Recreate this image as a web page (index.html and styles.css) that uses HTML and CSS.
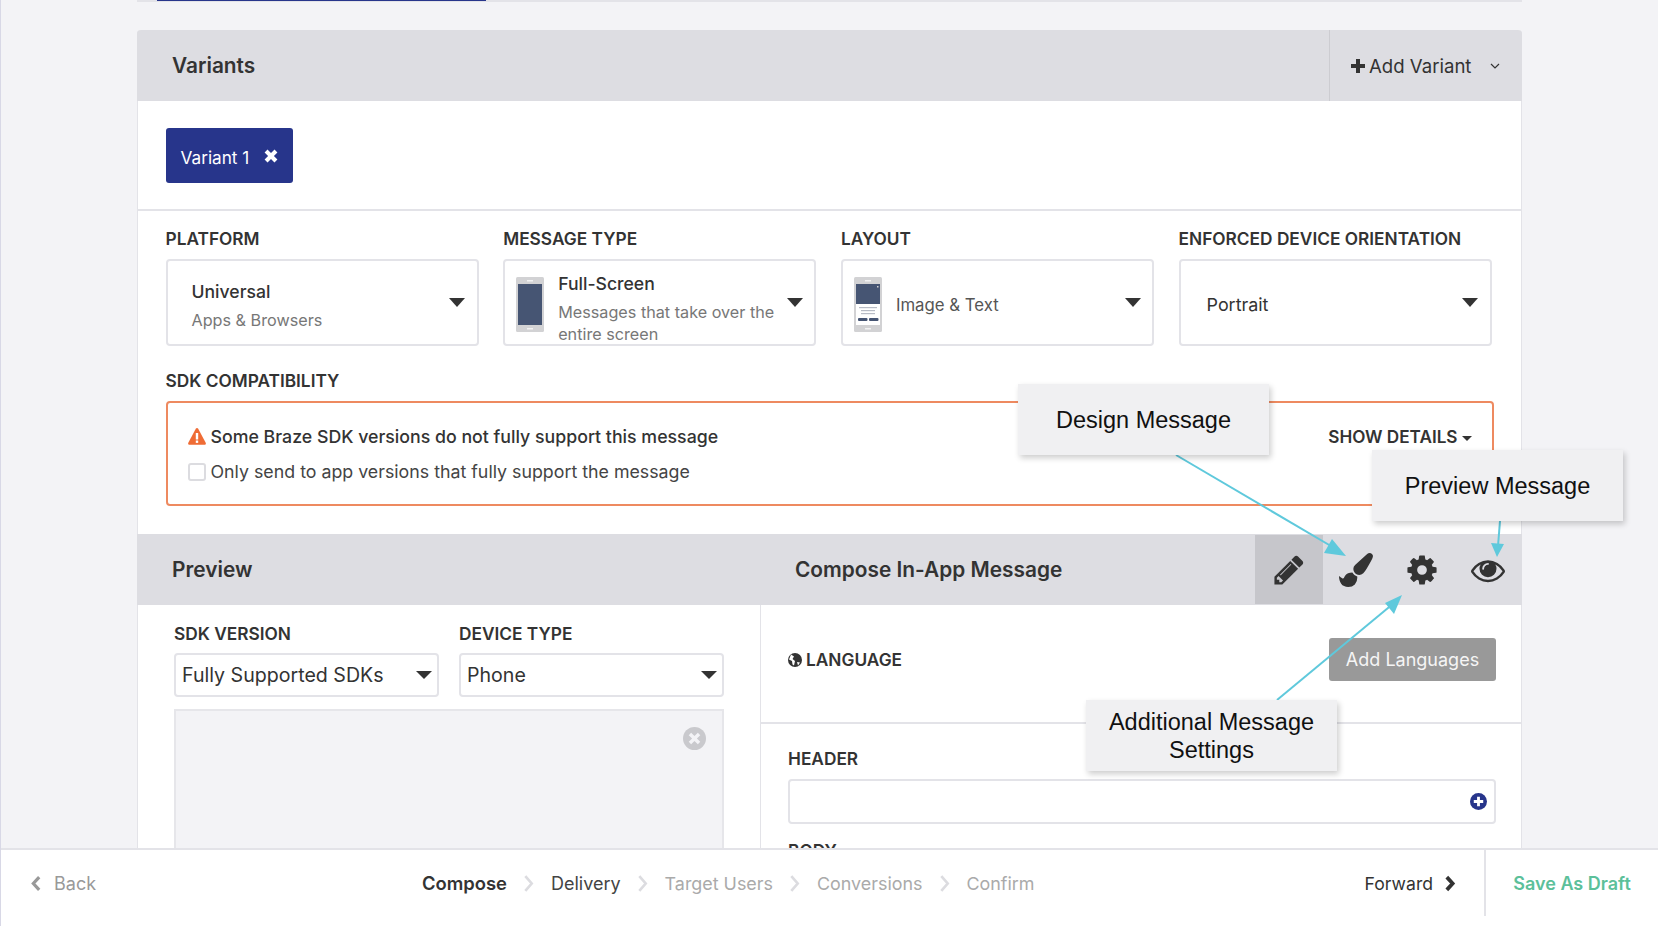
FILE: index.html
```html
<!DOCTYPE html>
<html>
<head>
    <title>Compose In-App Message</title>
    <link rel="stylesheet" href="styles.css">
</head>
<body>
    <div class="page">
        <div class="top-strip"><div class="top-strip-tab"></div></div>

        <div class="card">
            <div class="bar">
                <span class="bar-title">Variants</span>
                <div class="add-variant">
                    <svg class="add-plus" viewBox="0 0 14 14"><path d="M5 0h4v5h5v4H9v5H5V9H0V5h5z"/></svg>
                    <span>Add Variant</span>
                    <svg class="add-chevron" viewBox="0 0 10 6"><path d="M1 1l4 4 4-4" fill="none" stroke="#333" stroke-width="1.2"/></svg>
                </div>
            </div>

            <div class="variant-row">
                <div class="variant-pill">
                    <span>Variant 1</span>
                    <svg class="variant-x" viewBox="0 0 12 12"><path d="M3 .5L6 3.500 9 .5 11.500 3 8.500 6 11.500 9 9 11.500 6 8.500 3 11.500 .5 9 3.500 6 .5 3z"/></svg>
                </div>
            </div>

            <div class="settings">
                <div class="field">
                    <label class="field-label">PLATFORM</label>
                    <div class="picker picker-plain">
                        <div class="picker-text picker-text-tight">
                            <div class="picker-name">Universal</div>
                            <div class="picker-desc">Apps &amp; Browsers</div>
                        </div>
                        <span class="caret"></span>
                    </div>
                </div>
                <div class="field">
                    <label class="field-label">MESSAGE TYPE</label>
                    <div class="picker picker-icon">
                        <svg class="phone" viewBox="0 0 28 55">
                            <rect width="28" height="55" rx="1.500" fill="#d2d2d4"/>
                            <rect x="2" y="7" width="24" height="41" fill="#465573"/>
                            <rect x="11" y="3" width="6" height="1.500" fill="#f2f2f2"/>
                            <rect x="11" y="51" width="6" height="1.500" fill="#f2f2f2"/>
                        </svg>
                        <div class="picker-text picker-text-tighter">
                            <div class="picker-name">Full-Screen</div>
                            <div class="picker-desc">Messages that take over the entire screen</div>
                        </div>
                        <span class="caret"></span>
                    </div>
                </div>
                <div class="field">
                    <label class="field-label">LAYOUT</label>
                    <div class="picker picker-icon">
                        <svg class="phone" viewBox="0 0 28 55">
                            <rect width="28" height="55" rx="1.500" fill="#d2d2d4"/>
                            <rect x="2" y="7" width="24" height="41" fill="#fff"/>
                            <rect x="2" y="7" width="24" height="20" fill="#465573"/>
                            <rect x="23" y="9" width="1.500" height="1.500" fill="#d2d2d4"/>
                            <rect x="5" y="30" width="18" height="1.200" fill="#b8bcc6"/>
                            <rect x="7" y="33" width="14" height="1.200" fill="#b8bcc6"/>
                            <rect x="7" y="36" width="14" height="1.200" fill="#b8bcc6"/>
                            <rect x="4" y="41" width="9.500" height="3" rx="1" fill="#465573"/>
                            <rect x="15" y="41" width="9.500" height="3" rx="1" fill="#465573"/>
                            <rect x="11" y="3" width="6" height="1.500" fill="#f2f2f2"/>
                            <rect x="11" y="51" width="6" height="1.500" fill="#f2f2f2"/>
                        </svg>
                        <div class="picker-text picker-text-layout"><div class="picker-plain-value">Image &amp; Text</div></div>
                        <span class="caret"></span>
                    </div>
                </div>
                <div class="field">
                    <label class="field-label">ENFORCED DEVICE ORIENTATION</label>
                    <div class="picker picker-plain">
                        <div class="picker-text"><div class="picker-name picker-regular">Portrait</div></div>
                        <span class="caret"></span>
                    </div>
                </div>
            </div>

            <div class="compat">
                <label class="field-label">SDK COMPATIBILITY</label>
                <div class="compat-box">
                    <div class="compat-lines">
                        <div class="compat-line compat-warning">
                            <svg class="warn" viewBox="0 0 18 17">
                                <path d="M9 0c.5 0 .9.300 1.200.800l7.500 14c.500 1-.1 2-1.200 2H1.500c-1.100 0-1.700-1-1.200-2l7.500-14C8.100.300 8.500 0 9 0z" fill="#ef6c35"/>
                                <rect x="7.800" y="5" width="2.400" height="6.500" fill="#fff"/>
                                <rect x="7.800" y="12.500" width="2.400" height="2.400" fill="#fff"/>
                            </svg>
                            <span>Some Braze SDK versions do not fully support this message</span>
                        </div>
                        <div class="compat-line">
                            <span class="checkbox"></span>
                            <span>Only send to app versions that fully support the message</span>
                        </div>
                    </div>
                    <div class="show-details">SHOW DETAILS<span class="caret caret-small"></span></div>
                </div>
            </div>

            <div class="bar bar-split">
                <span class="bar-title bar-title-preview">Preview</span>
                <span class="bar-title bar-title-compose">Compose In-App Message</span>
                <div class="tabs">
                    <div class="tab tab-active">
                        <svg class="tab-icon" viewBox="0 0 1792 1792"><path d="M491 1536l91-91-235-235-91 91v107h128v128h107zm523-928q0-22-22-22-10 0-17 7l-542 542q-7 7-7 17 0 22 22 22 10 0 17-7l542-542q7-7 7-17zm-54-192l416 416-832 832h-416v-416zm683 96q0 53-37 90l-166 166-416-416 166-165q36-38 90-38 53 0 91 38l235 234q37 39 37 91z"/></svg>
                    </div>
                    <div class="tab">
                        <svg class="tab-icon" viewBox="0 0 1792 1792"><path d="M1615 0q70 0 122.500 46.500t52.500 116.500q0 63-45 151-332 629-465 752-97 91-218 91-126 0-216.500-92.500t-90.500-219.500q0-128 92-212l638-579q59-54 130-54zm-909 1034q39 76 106.500 130t150.500 76l1 71q4 213-129.500 347t-348.500 134q-123 0-218-46.500t-152.500-127.500-86.500-183-29-220q7 5 41 30t62 44.500 59 36.500 46 17q41 0 55-37 25-66 57.500-112.500t69.500-76 88-47.500 103-25.500 125-10.500z"/></svg>
                    </div>
                    <div class="tab">
                        <svg class="tab-icon" viewBox="0 0 1792 1792"><path d="M1152 896q0-106-75-181t-181-75-181 75-75 181 75 181 181 75 181-75 75-181zm512-109v222q0 12-8 23t-20 13l-185 28q-19 54-39 91 35 50 107 138 10 12 10 25t-9 23q-27 37-99 108t-94 71q-12 0-26-9l-138-108q-44 23-91 38-16 136-29 186-7 28-36 28h-222q-14 0-24.500-8.500t-11.500-21.500l-28-184q-49-16-90-37l-141 107q-10 9-25 9-14 0-25-11-126-114-165-168-7-10-7-23 0-12 8-23 15-21 51-66.500t54-70.500q-27-50-41-99l-183-27q-13-2-21-12.500t-8-23.500v-222q0-12 8-23t19-13l186-28q14-46 39-92-40-57-107-138-10-12-10-24 0-10 9-23 26-36 98.500-107.500t94.500-71.500q13 0 26 10l138 107q44-23 91-38 16-136 29-186 7-28 36-28h222q14 0 24.500 8.500t11.500 21.500l28 184q49 16 90 37l142-107q9-9 24-9 13 0 25 10 129 119 165 170 7 8 7 22 0 12-8 23-15 21-51 66.500t-54 70.500q26 50 41 98l183 28q13 2 21 12.500t8 23.500z"/></svg>
                    </div>
                    <div class="tab">
                        <svg class="tab-icon" viewBox="0 0 1792 1792"><path d="M1664 960q-152-236-381-353 61 104 61 225 0 185-131.500 316.500t-316.500 131.500-316.500-131.500-131.500-316.500q0-121 61-225-229 117-381 353 133 205 333.500 326.500t434.500 121.500 434.500-121.500 333.500-326.500zm-720-384q0-20-14-34t-34-14q-125 0-214.500 89.500t-89.500 214.500q0 20 14 34t34 14 34-14 14-34q0-86 61-147t147-61q20 0 34-14t14-34zm848 384q0 34-20 69-140 230-376.500 368.500t-499.500 138.500-499.500-139-376.500-368q-20-35-20-69t20-69q140-229 376.500-368t499.500-139 499.500 139 376.500 368q20 35 20 69z"/></svg>
                    </div>
                </div>
            </div>

            <div class="workspace">
                <div class="preview-col">
                    <div class="preview-fields">
                        <div class="field">
                            <label class="field-label">SDK VERSION</label>
                            <div class="select"><span>Fully Supported SDKs</span><span class="caret caret-mid"></span></div>
                        </div>
                        <div class="field">
                            <label class="field-label">DEVICE TYPE</label>
                            <div class="select"><span>Phone</span><span class="caret caret-mid"></span></div>
                        </div>
                    </div>
                    <div class="device-frame">
                        <svg class="device-close" viewBox="0 0 24 24">
                            <circle cx="12" cy="12" r="12" fill="#c9c9cd"/>
                            <path d="M8.500 6L12 9.500 15.500 6 18 8.500 14.500 12 18 15.500 15.500 18 12 14.500 8.500 18 6 15.500 9.500 12 6 8.500z" fill="#f3f3f6"/>
                        </svg>
                    </div>
                </div>
                <div class="compose-col">
                    <div class="language-row">
                        <div class="language-label">
                            <svg class="globe" viewBox="0 0 14 14">
                                <circle cx="7" cy="7" r="7" fill="#333"/>
                                <path d="M3 1.500l3 2-1.500 2.500 2.500 2-1 4.500-1.500-1-.5-3.500L1 6.500z M9 9l3 .5-2 3z" fill="#fff"/>
                            </svg>
                            <span class="field-label">LANGUAGE</span>
                        </div>
                        <div class="add-languages">Add Languages</div>
                    </div>
                    <div class="compose-fields">
                        <label class="field-label">HEADER</label>
                        <div class="text-input">
                            <svg class="input-plus" viewBox="0 0 18 18">
                                <circle cx="9" cy="9" r="9" fill="#27358b"/>
                                <path d="M7.500 4h3v3.500H14v3h-3.500V14h-3v-3.500H4v-3h3.500z" fill="#fff"/>
                            </svg>
                        </div>
                        <label class="field-label field-label-body">BODY</label>
                    </div>
                </div>
            </div>
        </div>
    </div>

    <!-- callouts drawn over the screenshot -->
    <svg class="arrows" viewBox="0 0 1658 926">
        <g stroke="#5fc9dc" stroke-width="2" fill="#5fc9dc">
            <line x1="1176" y1="455" x2="1336" y2="549"/>
            <path d="M1346 556l-22-3 8-14z" stroke="none"/>
            <line x1="1500" y1="521" x2="1498" y2="546"/>
            <path d="M1497 557l-6-14 13 1z" stroke="none"/>
            <line x1="1277" y1="700" x2="1394" y2="603"/>
            <path d="M1402 595l-8 19-9-11z" stroke="none"/>
        </g>
    </svg>
    <div class="callout callout-design">Design Message</div>
    <div class="callout callout-preview">Preview Message</div>
    <div class="callout callout-settings">Additional Message Settings</div>

    <div class="footer">
        <div class="footer-back">
            <svg class="footer-chevron" viewBox="0 0 10 16"><path d="M8 2L2.500 8 8 14" fill="none" stroke="#999" stroke-width="3"/></svg>
            <span>Back</span>
        </div>
        <div class="steps">
            <span class="step step-current">Compose</span>
            <svg class="step-arrow" viewBox="0 0 10 16"><path d="M2 1l6 7-6 7" fill="none" stroke="#dcdce0" stroke-width="2.500"/></svg>
            <span class="step step-next">Delivery</span>
            <svg class="step-arrow" viewBox="0 0 10 16"><path d="M2 1l6 7-6 7" fill="none" stroke="#dcdce0" stroke-width="2.500"/></svg>
            <span class="step">Target Users</span>
            <svg class="step-arrow" viewBox="0 0 10 16"><path d="M2 1l6 7-6 7" fill="none" stroke="#dcdce0" stroke-width="2.500"/></svg>
            <span class="step">Conversions</span>
            <svg class="step-arrow" viewBox="0 0 10 16"><path d="M2 1l6 7-6 7" fill="none" stroke="#dcdce0" stroke-width="2.500"/></svg>
            <span class="step">Confirm</span>
        </div>
        <div class="footer-forward">
            <span>Forward</span>
            <svg class="footer-chevron" viewBox="0 0 10 16"><path d="M2 2l5.500 6L2 14" fill="none" stroke="#333" stroke-width="3.500"/></svg>
        </div>
        <div class="footer-draft">Save As Draft</div>
    </div>
</body>
</html>
```

FILE: styles.css
```css
html, body {
    height: 100%;
    margin: 0;
    background: #f3f3f6;
    overflow: hidden;
}

body {
    font-family: Inter, "Liberation Sans", sans-serif;
    font-size: 17px;
    color: #333;
    border-left: 1px solid #d8d8e6;
    box-sizing: border-box;
    position: relative;
}

.page {
    width: 1385px;
    margin-left: 136px;
}

.top-strip {
    height: 2px;
    background: #e3e3e8;
}

.top-strip-tab {
    width: 329px;
    height: 1px;
    margin-left: 20px;
    background: #27358b;
}

.card {
    margin-top: 28px;
    background: #fff;
    border-right: 1px solid #e3e3e8;
    border-left: 1px solid #e3e3e8;
    height: 896px;
    border-radius: 4px 4px 0 0;
    box-sizing: border-box;
}

.bar {
    display: flex;
    align-items: center;
    height: 71px;
    margin: 0 -1px;
    background: #dddde2;
    border-radius: 4px 4px 0 0;
}

.bar-title {
    font-size: 20.850px;
    font-weight: 600;
    margin-left: 35px;
}

.add-variant {
    display: flex;
    align-items: center;
    align-self: stretch;
    margin-left: auto;
    width: 193px;
    padding-left: 21px;
    box-sizing: border-box;
    border-left: 1px solid #ccccd1;
    font-size: 18.600px;
}

.add-plus {
    width: 14px;
    height: 14px;
    fill: #333;
    margin-right: 4px;
}

.add-chevron {
    width: 10px;
    height: 6px;
    margin-left: 19px;
}

.variant-row {
    height: 110px;
    padding: 27px 0 0 27.500px;
    box-sizing: border-box;
    border-bottom: 2px solid #e3e3e8;
}

.variant-pill {
    display: inline-flex;
    align-items: center;
    width: 127.500px;
    height: 55px;
    padding: 3px 0 0 15px;
    box-sizing: border-box;
    background: #27358b;
    border-radius: 3px;
    color: #fff;
    font-size: 17.200px;
}

.variant-x {
    width: 14px;
    height: 14px;
    fill: #fff;
    margin-left: 15px;
    margin-top: -3px;
}

.settings {
    display: grid;
    grid-template-columns: repeat(4, 313px);
    column-gap: 24.700px;
    padding: 18px 0 0 27.500px;
}

.field-label {
    display: block;
    font-size: 17.300px;
    font-weight: 600;
    line-height: 20px;
}

.picker {
    display: flex;
    align-items: center;
    height: 87px;
    margin-top: 10px;
    box-sizing: border-box;
    background: #fff;
    border: 2px solid #e3e3e8;
    border-radius: 4px;
}

.picker-plain {
    padding: 0 12px 0 24px;
}

.picker-icon {
    padding: 0 11px 0 11px;
}

.phone {
    flex: none;
    width: 28px;
    height: 55px;
    margin-top: 4px;
}

.picker-text {
    flex: 1;
    padding-top: 3px;
}

.picker-icon .picker-text {
    margin-left: 14px;
}

.picker-name {
    font-size: 17.600px;
    font-weight: 500;
    line-height: 22px;
    margin-bottom: 6px;
}

.picker-regular {
    font-weight: 400;
    font-size: 17.900px;
    margin-bottom: 0;
    margin-left: 2px;
    padding-top: 2px;
}

.picker-desc {
    font-size: 16.200px;
    line-height: 22px;
    color: #777;
}

.picker-text-tight {
    padding-top: 6px;
}

.picker-text-tighter {
    padding-top: 12px;
}

.picker-text-layout {
    padding-top: 5px;
}

.picker-plain-value {
    font-size: 16.800px;
    color: #555;
}

.caret {
    flex: none;
    width: 0;
    height: 0;
    margin-top: -1px;
    border-top: 9px solid #333;
    border-right: 8px solid transparent;
    border-left: 8px solid transparent;
}

.caret-small {
    display: inline-block;
    vertical-align: middle;
    margin-top: 0;
    margin-left: 4px;
    border-top-width: 5px;
    border-right-width: 5px;
    border-left-width: 5px;
}

.caret-mid {
    margin-left: auto;
    border-top-width: 8px;
}

.compat {
    padding: 25px 0 0 27.500px;
}

.compat-box {
    position: relative;
    display: flex;
    align-items: flex-start;
    justify-content: space-between;
    width: 1328px;
    height: 105px;
    margin-top: 10px;
    padding: 16px 20px 0 20px;
    box-sizing: border-box;
    border: 2px solid #ee8a60;
    border-radius: 4px;
}

.compat-line {
    display: flex;
    align-items: center;
    gap: 5px;
    height: 35px;
    font-size: 17.800px;
    color: #444;
}

.compat-warning {
    font-weight: 500;
    font-size: 17.750px;
    color: #333;
}

.warn {
    width: 18px;
    height: 17px;
}

.checkbox {
    width: 14px;
    height: 14px;
    border: 2px solid #dcdce0;
    border-radius: 3px;
}

.show-details {
    font-size: 17.150px;
    font-weight: 600;
    line-height: 35px;
}

.bar-split {
    position: relative;
    margin-top: 28px;
    border-radius: 0;
}

.bar-title-compose {
    margin-left: 0;
    position: absolute;
    left: 658px;
}

.tabs {
    display: flex;
    margin-left: auto;
    margin-right: 1px;
    height: 69px;
    align-self: center;
}

.tab {
    display: flex;
    align-items: center;
    justify-content: center;
    width: 66px;
}

.tab-active {
    width: 68px;
    background: #c6c6cb;
}

.tab-icon {
    width: 34px;
    height: 34px;
    fill: #333;
}

.workspace {
    display: grid;
    grid-template-columns: 623px 1fr;
}

.preview-col {
    padding: 19px 36px 0 36px;
    border-right: 1px solid #e3e3e8;
    height: 300px;
    box-sizing: border-box;
}

.preview-fields {
    display: grid;
    grid-template-columns: 265px 265px;
    column-gap: 20px;
}

.select {
    display: flex;
    align-items: center;
    height: 44px;
    margin-top: 9px;
    padding: 0 5px 0 6px;
    box-sizing: border-box;
    border: 2px solid #e3e3e8;
    border-radius: 4px;
    font-size: 19.600px;
}

.device-frame {
    display: flex;
    justify-content: flex-end;
    height: 200px;
    margin-top: 12px;
    padding: 16px 16px 0 0;
    box-sizing: border-box;
    background: #f3f3f6;
    border: 2px solid #e6e6ea;
}

.device-close {
    width: 23px;
    height: 23px;
}

.language-row {
    display: flex;
    align-items: flex-start;
    justify-content: space-between;
    height: 119px;
    padding: 33px 25px 0 27px;
    box-sizing: border-box;
    border-bottom: 2px solid #e3e3e8;
}

.language-label {
    display: flex;
    align-items: center;
    gap: 4px;
    height: 43px;
}

.globe {
    width: 14px;
    height: 14px;
}

.add-languages {
    display: flex;
    align-items: center;
    justify-content: center;
    width: 167px;
    height: 43px;
    background: #999;
    border-radius: 3px;
    color: #f5f5f5;
    font-size: 18px;
}

.compose-fields {
    padding: 25px 25px 0 27px;
}

.text-input {
    display: flex;
    align-items: center;
    justify-content: flex-end;
    height: 45px;
    margin-top: 10px;
    padding-right: 7px;
    box-sizing: border-box;
    border: 2px solid #e3e3e8;
    border-radius: 4px;
}

.input-plus {
    width: 17px;
    height: 17px;
}

.field-label-body {
    margin-top: 17px;
}

.arrows {
    position: absolute;
    top: 0;
    left: -1px;
    width: 1658px;
    height: 926px;
    z-index: 2;
}

.callout {
    position: absolute;
    z-index: 3;
    display: flex;
    align-items: center;
    justify-content: center;
    width: 251px;
    height: 71px;
    box-sizing: border-box;
    padding: 0 20px;
    background: #f0f0f2;
    box-shadow: 2px 3px 6px rgba(0, 0, 0, .2);
    color: #111;
    font-family: "Liberation Sans", Arial, sans-serif;
    font-size: 23.500px;
    line-height: 28px;
    text-align: center;
}

.callout-design {
    top: 384px;
    left: 1017px;
}

.callout-preview {
    top: 450px;
    left: 1371px;
}

.callout-settings {
    top: 700px;
    left: 1085px;
}

.footer {
    position: absolute;
    z-index: 4;
    left: -1px;
    right: 0;
    top: 848px;
    bottom: 0;
    display: flex;
    align-items: flex-start;
    background: #fff;
    border-top: 2px solid #e3e3e8;
    font-size: 18px;
}

.footer-back {
    display: flex;
    align-items: center;
    gap: 12px;
    width: 422px;
    height: 66px;
    padding: 0 0 0 30px;
    box-sizing: border-box;
    color: #999;
}

.footer-chevron {
    width: 12px;
    height: 17px;
}

.steps {
    display: flex;
    align-items: center;
    flex: 1;
    height: 66px;
    gap: 16.500px;
    color: #aaa;
    font-size: 17.900px;
}

.step-current {
    font-weight: 600;
    font-size: 18.400px;
    color: #333;
}

.step-next {
    font-size: 18px;
    color: #444;
}

.step-arrow {
    width: 11px;
    height: 17px;
}

.footer-forward {
    display: flex;
    align-items: center;
    gap: 11px;
    height: 66px;
    padding-right: 28px;
    font-size: 17.600px;
}

.footer-draft {
    display: flex;
    align-items: center;
    justify-content: center;
    width: 174px;
    height: 66px;
    border-left: 2px solid #e3e3e8;
    color: #5cc09a;
    font-weight: 600;
    box-sizing: border-box;
}
```
